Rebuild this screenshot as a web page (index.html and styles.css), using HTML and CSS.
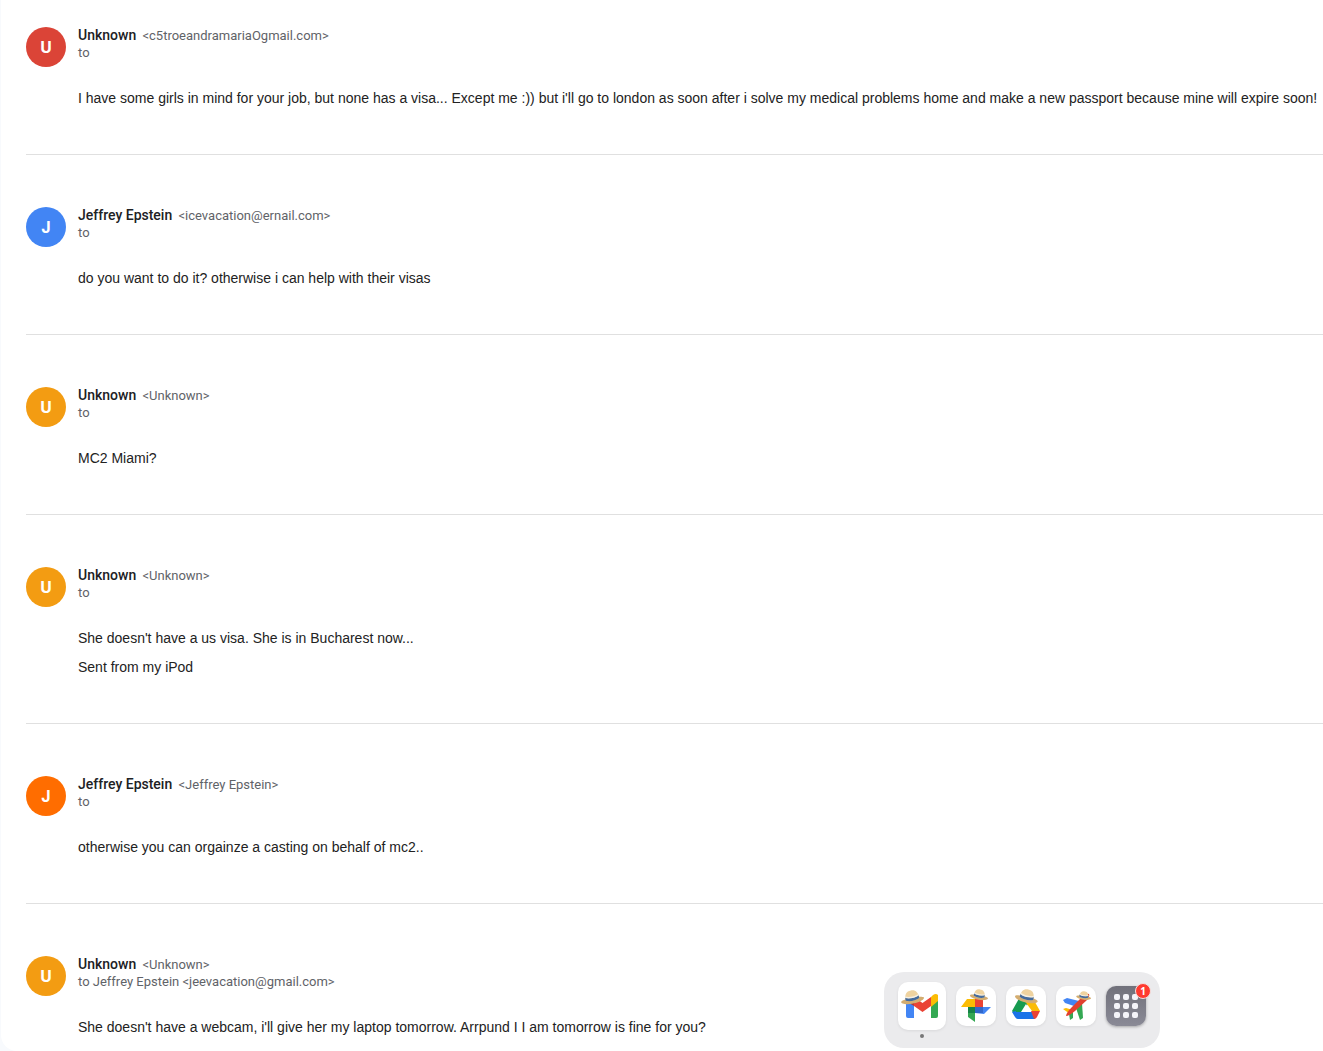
FILE: index.html
```html
<!DOCTYPE html>
<html lang="en">
<head>
    <meta charset="UTF-8">
    <meta name="viewport" content="width=device-width, initial-scale=1.0">
    <title>Conversation</title>
    <link rel="stylesheet" href="styles.css">
</head>
<body>
    <main class="thread">
        <article class="message">
            <div class="avatar avatar-red">U</div>
            <div class="content">
                <header class="sender">
                    <div><span class="name">Unknown</span> <span class="address">&lt;c5troeandramariaOgmail.com&gt;</span></div>
                    <div class="recipient">to</div>
                </header>
                <div class="text">
                    <p>I have some girls in mind for your job, but none has a visa... Except me :)) but i'll go to london as soon after i solve my medical problems home and make a new passport because mine will expire soon!</p>
                </div>
            </div>
        </article>

        <article class="message">
            <div class="avatar avatar-blue">J</div>
            <div class="content">
                <header class="sender">
                    <div><span class="name">Jeffrey Epstein</span> <span class="address">&lt;icevacation@ernail.com&gt;</span></div>
                    <div class="recipient">to</div>
                </header>
                <div class="text">
                    <p>do you want to do it? otherwise i can help with their visas</p>
                </div>
            </div>
        </article>

        <article class="message">
            <div class="avatar avatar-amber">U</div>
            <div class="content">
                <header class="sender">
                    <div><span class="name">Unknown</span> <span class="address">&lt;Unknown&gt;</span></div>
                    <div class="recipient">to</div>
                </header>
                <div class="text">
                    <p>MC2 Miami?</p>
                </div>
            </div>
        </article>

        <article class="message">
            <div class="avatar avatar-amber">U</div>
            <div class="content">
                <header class="sender">
                    <div><span class="name">Unknown</span> <span class="address">&lt;Unknown&gt;</span></div>
                    <div class="recipient">to</div>
                </header>
                <div class="text">
                    <p>She doesn't have a us visa. She is in Bucharest now...</p>
                    <p>Sent from my iPod</p>
                </div>
            </div>
        </article>

        <article class="message">
            <div class="avatar avatar-orange">J</div>
            <div class="content">
                <header class="sender">
                    <div><span class="name">Jeffrey Epstein</span> <span class="address">&lt;Jeffrey Epstein&gt;</span></div>
                    <div class="recipient">to</div>
                </header>
                <div class="text">
                    <p>otherwise you can orgainze a casting on behalf of mc2..</p>
                </div>
            </div>
        </article>

        <article class="message">
            <div class="avatar avatar-amber">U</div>
            <div class="content">
                <header class="sender">
                    <div><span class="name">Unknown</span> <span class="address">&lt;Unknown&gt;</span></div>
                    <div class="recipient">to Jeffrey Epstein &lt;jeevacation@gmail.com&gt;</div>
                </header>
                <div class="text">
                    <p>She doesn't have a webcam, i'll give her my laptop tomorrow. Arrpund I I am tomorrow is fine for you?</p>
                </div>
            </div>
        </article>
    </main>

    <!-- straw hat shared by the app icons -->
    <svg class="defs" width="0" height="0" aria-hidden="true">
        <symbol id="hat" viewBox="0 0 24 14">
            <path d="M0.500 9.500C3 7 21 7 23.500 9.500C24.500 11.500 19 13.700 12 13.700S-0.500 11.500 0.500 9.500Z" fill="#d4ad70"/>
            <path d="M5 9.500C5 3 7.500 0.300 12 0.300S19 3 19 9.500C15 11.500 9 11.500 5 9.500Z" fill="#efd3a0"/>
            <path d="M5.200 6.500C9 8.300 15 8.300 18.800 6.500L19 9.500C15 11.500 9 11.500 5 9.500Z" fill="#456b9c"/>
            <path d="M5.300 5.300C9 7.100 15 7.100 18.700 5.300L18.800 6.700C15 8.500 9 8.500 5.200 6.700Z" fill="#f5efe2"/>
        </symbol>
    </svg>

    <nav class="dock" aria-label="Apps">
        <a href="#mail" class="app app-active" aria-label="Mail">
            <svg viewBox="0 0 48 48">
                <path d="M8 16L16 21V36H10Q8 36 8 34Z" fill="#4285f4"/>
                <path d="M33 20L40 15V34Q40 36 38 36H33Z" fill="#34a853"/>
                <path d="M33 15L35 13Q38 11 40 13V19L33 25Z" fill="#fbbc04"/>
                <path d="M16 15L24.500 21L33 15V24L24.500 30L16 24Z" fill="#ea4335"/>
                <path d="M8 15Q8 12 11 12L16 15V24L8 19Z" fill="#b93630"/>
                <use href="#hat" x="2" y="8" width="24" height="14" transform="rotate(-11 14 15)"/>
            </svg>
        </a>
        <a href="#photos" class="app" aria-label="Photos">
            <svg viewBox="0 0 40 40">
                <path d="M19 9H26L27 12V21H19Z" fill="#ea4335"/>
                <path d="M19 21H35L28 28L19 27Z" fill="#4285f4"/>
                <path d="M12 21H19V36L12 31Z" fill="#34a853"/>
                <path d="M5 21L11 13H19V21Z" fill="#fbbc04"/>
                <path d="M12 21H19V27H12Z" fill="#168447"/>
                <path d="M19 21H27V27H19Z" fill="#3267ca"/>
                <use href="#hat" x="14" y="3" width="19" height="11" transform="rotate(10 23 8)"/>
            </svg>
        </a>
        <a href="#drive" class="app" aria-label="Drive">
            <svg viewBox="0 0 40 40">
                <path d="M15 9H20L24 15L12 33L6 25Z" fill="#169b50"/>
                <path d="M20 9H25L34 25H26L18 14Z" fill="#fbbc04"/>
                <path d="M10 26H27L29 33H12Q10 33 9 31L6 26L10 25Z" fill="#1a73e8"/>
                <path d="M25 25H34L31 31Q30 33 28 33Z" fill="#ea4335"/>
                <path d="M20 18L25 26H15Z" fill="#fff"/>
                <use href="#hat" x="8" y="3" width="26" height="14" transform="rotate(13 21 10)"/>
            </svg>
        </a>
        <a href="#flights" class="app" aria-label="Flights">
            <svg viewBox="0 0 40 40">
                <path d="M7 14L11 12L27 16L21 21L9 17Z" fill="#4285f4"/>
                <path d="M20 22L26 17L27 32L24 34Z" fill="#34a853"/>
                <path d="M7 23L10 22L17 24L14 28Z" fill="#fbbc04"/>
                <path d="M13 28L17 25L17 32L14 34Z" fill="#34a853"/>
                <path d="M10 30Q10 27 16 21L27 10Q31 7 33 8Q34 10 31 14L19 25Q13 30 10 30Z" fill="#e2402f"/>
                <use href="#hat" x="20" y="5" width="16" height="9" transform="rotate(8 28 9)"/>
            </svg>
        </a>
        <a href="#more" class="app app-more" aria-label="More apps">
            <svg viewBox="0 0 40 40" fill="#f4f4f9">
                <rect x="8" y="8" width="6" height="6" rx="2"/>
                <rect x="17" y="8" width="6" height="6" rx="2"/>
                <rect x="26" y="8" width="6" height="6" rx="2"/>
                <rect x="8" y="17" width="6" height="6" rx="2"/>
                <rect x="17" y="17" width="6" height="6" rx="2"/>
                <rect x="26" y="17" width="6" height="6" rx="2"/>
                <rect x="8" y="26" width="6" height="6" rx="2"/>
                <rect x="17" y="26" width="6" height="6" rx="2"/>
                <rect x="26" y="26" width="6" height="6" rx="2"/>
            </svg>
            <span class="badge">1</span>
        </a>
    </nav>
</body>
</html>
```
FILE: styles.css
```css
* {
    margin: 0;
    padding: 0;
    box-sizing: border-box;
}

body {
    background-color: #f8fafd;
    color: #222;
    font-family: Roboto, sans-serif;
}

.thread {
    min-height: 100vh;
    margin-left: 1px;
    padding: 27px 0 0 25px;
    background-color: #fff;
    border-bottom-left-radius: 16px;
}

.message {
    display: flex;
    gap: 12px;
    margin-bottom: 52px;
    padding-bottom: 46px;
    border-bottom: 1px solid #e0e0e0;
}

.message:last-child {
    margin-bottom: 0;
    padding-bottom: 0;
    border-bottom: none;
}

.avatar {
    display: flex;
    flex: none;
    align-items: center;
    justify-content: center;
    width: 40px;
    height: 40px;
    border-radius: 50%;
    color: #fff;
    font-family: "Open Sans", sans-serif;
    font-size: 16px;
    font-weight: 700;
}

.avatar-red {
    background-color: #db4437;
}

.avatar-blue {
    background-color: #4285f4;
}

.avatar-amber {
    background-color: #f39c12;
}

.avatar-orange {
    background-color: #ff6d00;
}

/* this J hangs below the baseline in Open Sans */
.avatar-blue,
.avatar-orange {
    font-family: Inter, sans-serif;
}

.content {
    flex: 1;
    min-width: 0;
}

.sender {
    height: 40px;
    margin-bottom: 21px;
    color: #5f6368;
    font-size: 13px;
    line-height: 17px;
}

.name {
    margin-right: 3px;
    color: #202124;
    font-size: 14px;
    font-weight: 500;
}

.text {
    font-family: "Liberation Sans", Arial, sans-serif;
    font-size: 14px;
    line-height: 20px;
}

.text p + p {
    margin-top: 9px;
}

.defs {
    position: absolute;
}

/* Dock */
.dock {
    position: fixed;
    right: 163px;
    bottom: 3px;
    display: flex;
    align-items: center;
    gap: 10px;
    padding: 10px 14px 18px;
    background-color: #ebebed;
    border-radius: 20px;
}

.app {
    position: relative;
    width: 40px;
    height: 40px;
    background-color: #fff;
    border-radius: 10px;
    box-shadow: 0 1px 3px rgba(0, 0, 0, 0.08);
}

.app svg {
    display: block;
    width: 100%;
    height: 100%;
}

.app-active {
    width: 48px;
    height: 48px;
}

.app-active::after {
    content: "";
    position: absolute;
    bottom: -8px;
    left: 22px;
    width: 4px;
    height: 4px;
    background-color: #777;
    border-radius: 50%;
}

.app-more {
    background: linear-gradient(#71717b, #8a8a96);
    box-shadow: 0 1px 3px rgba(0, 0, 0, 0.3);
}

.badge {
    position: absolute;
    top: -3px;
    right: -5px;
    width: 16px;
    height: 16px;
    border: 1px solid #f3dedd;
    border-radius: 50%;
    background-color: #ff3b30;
    color: #fff;
    font-family: "Open Sans", sans-serif;
    font-size: 10px;
    font-weight: 700;
    line-height: 14px;
    text-align: center;
}
```
